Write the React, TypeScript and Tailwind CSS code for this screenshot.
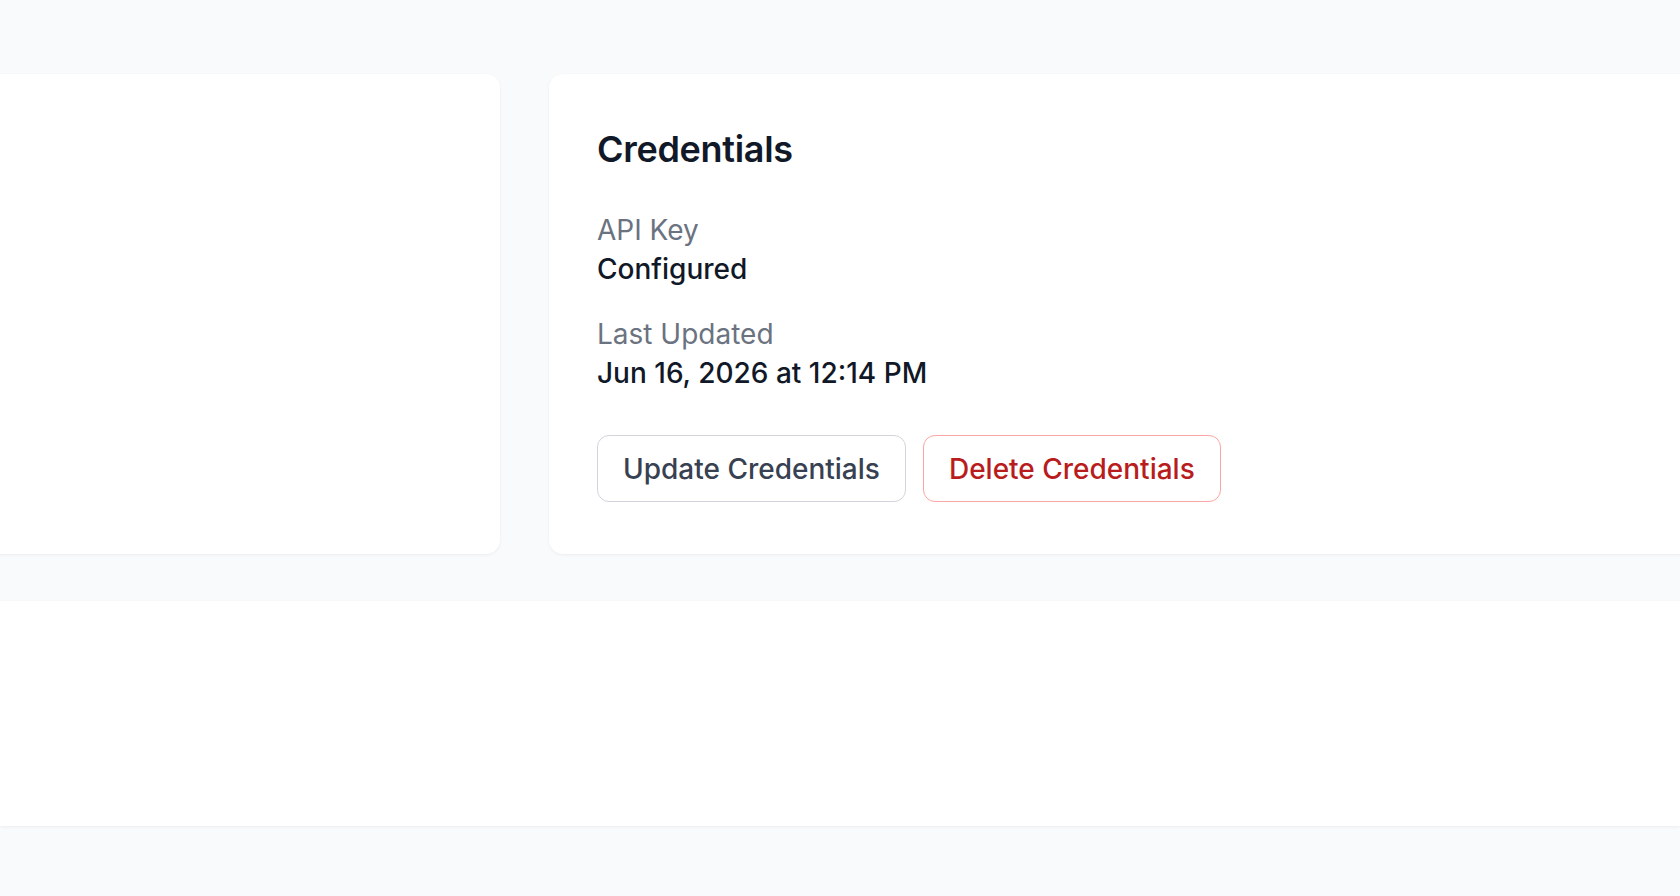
import React from "react";

export default function App() {
  return (
    <div
      className="min-h-[896px] w-full overflow-hidden bg-[#f9fafb] flex flex-col"
      style={{ fontFamily: "Inter, 'Noto Sans', sans-serif" }}
    >
      <div className="pt-[74px]">
        <div className="flex gap-[49px] h-[480px]">
          <div className="ml-[-40px] w-[540px] shrink-0 bg-white rounded-[14px] shadow-[0_1px_3px_rgba(0,0,0,0.06)]" />
          <div className="flex-1 mr-[-40px] bg-white rounded-[14px] shadow-[0_1px_3px_rgba(0,0,0,0.06)] pl-[48px] pt-[48px]">
            <h2 className="text-[36px] leading-[54px] font-semibold text-[#111827] tracking-[-0.3px]">
              Credentials
            </h2>
            <div className="mt-[35px] flex flex-col gap-[26px]">
              <div>
                <div className="text-[28px] leading-[39px] text-[#6b7280]">API Key</div>
                <div className="text-[28px] leading-[39px] font-medium text-[#111827]">Configured</div>
              </div>
              <div>
                <div className="text-[28px] leading-[39px] text-[#6b7280]">Last Updated</div>
                <div className="text-[28px] leading-[39px] font-medium text-[#111827]">
                  Jun 16, 2026 at 12:14 PM
                </div>
              </div>
            </div>
            <div className="mt-[42px] flex gap-[17px]">
              <button className="h-[67px] px-[25px] flex items-center rounded-[12px] border-[1.5px] border-[#d1d5db] bg-white text-[28px] font-medium text-[#374151]">
                Update Credentials
              </button>
              <button className="h-[67px] px-[25px] flex items-center rounded-[12px] border-[1.5px] border-[#fca5a5] bg-white text-[28px] font-medium text-[#b91c1c]">
                Delete Credentials
              </button>
            </div>
          </div>
        </div>
      </div>
      <div className="mt-[47px] h-[225px] bg-white shadow-[0_1px_3px_rgba(0,0,0,0.06)]" />
    </div>
  );
}
